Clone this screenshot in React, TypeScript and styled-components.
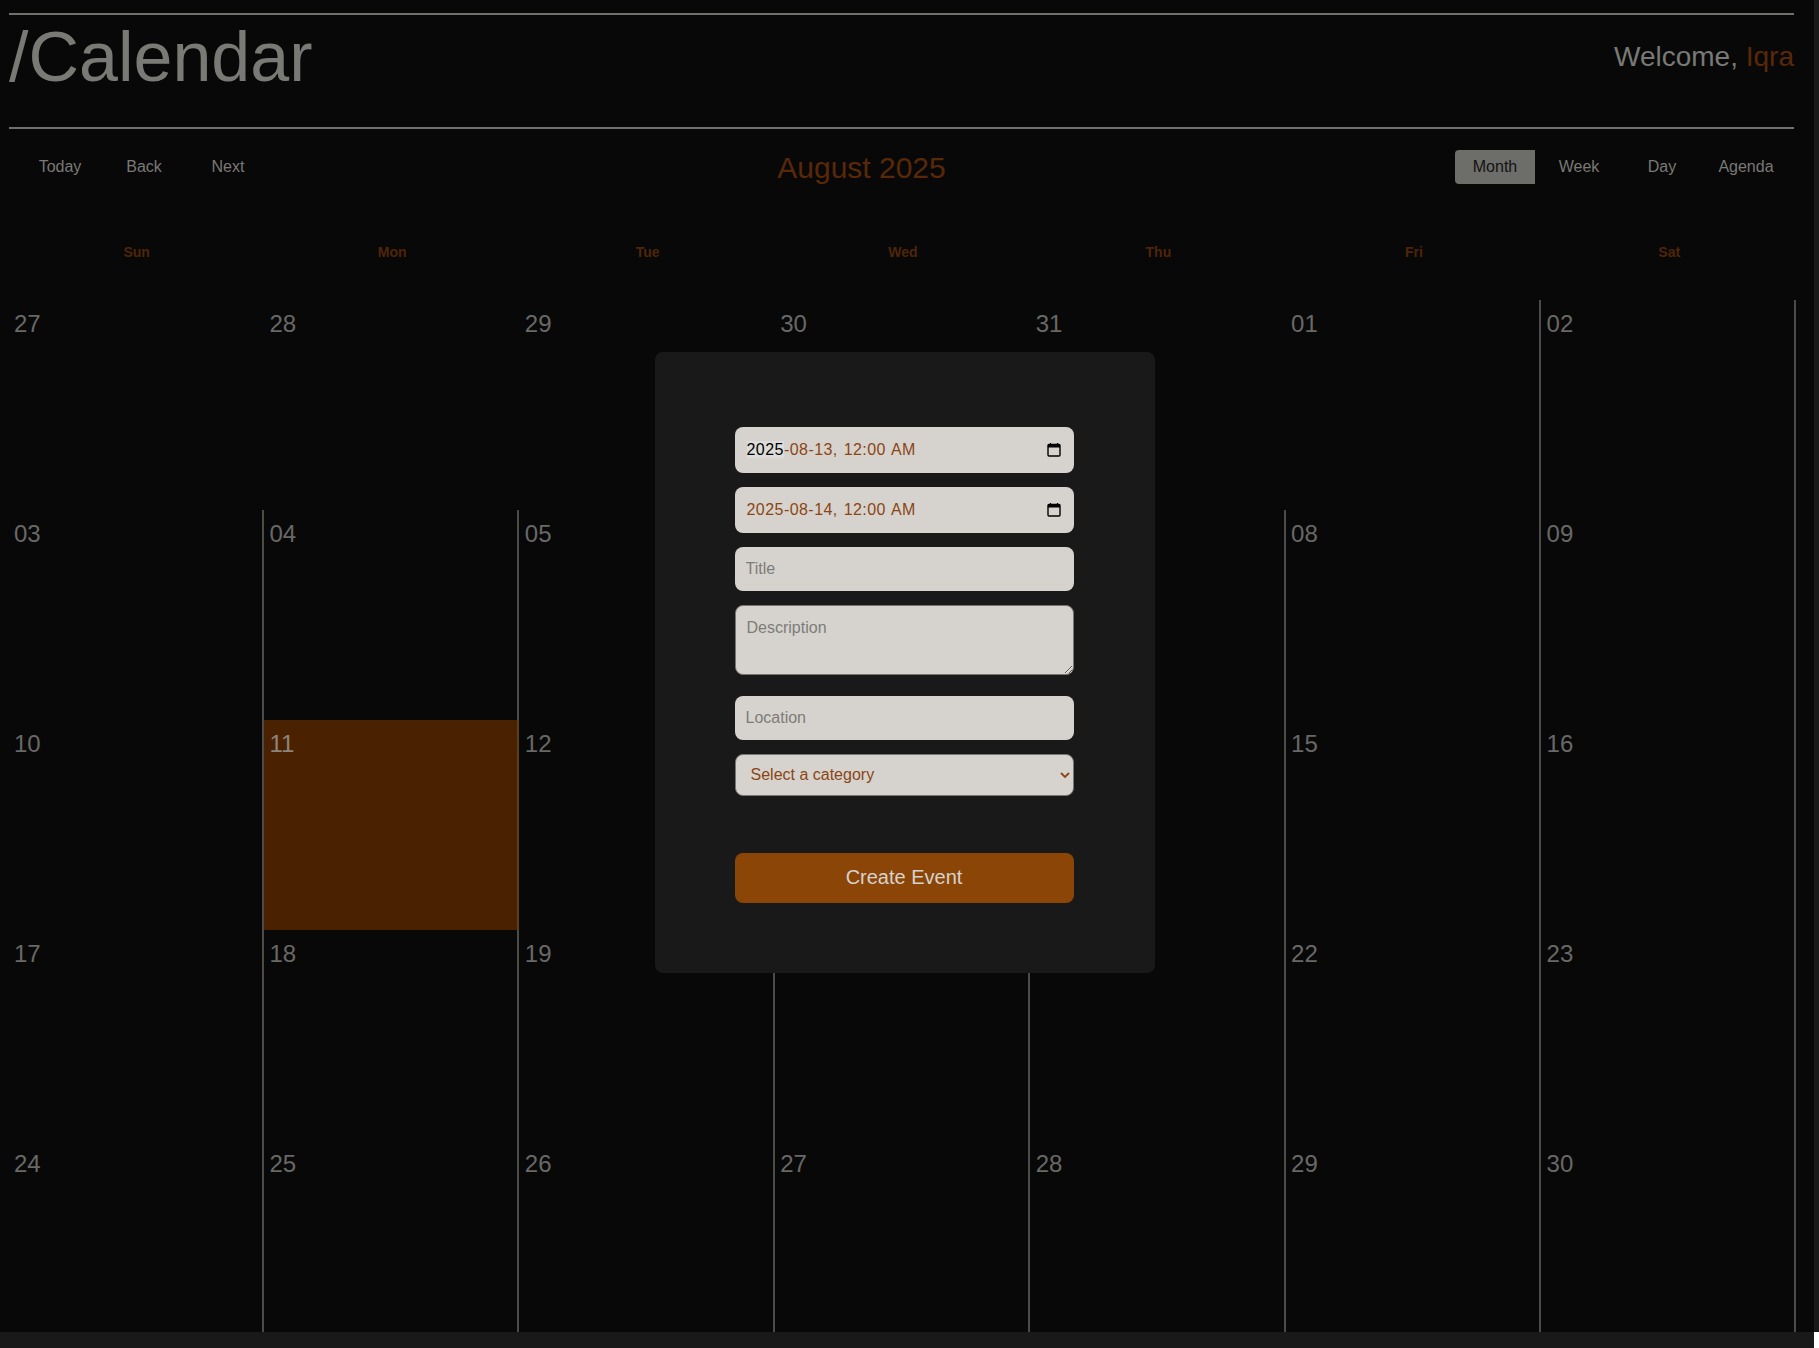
import React from "react";
import styled, { createGlobalStyle } from "styled-components";

const GlobalStyle = createGlobalStyle`
  html, body {
    margin: 0;
    background: #191919;
  }
  body {
    font-family: "Liberation Sans", Arial, sans-serif;
    overflow: hidden;
  }
`;

const Shell = styled.div`
  width: 1819px;
  height: 1348px;
  display: flex;
  flex-direction: column;
  background: #191919;
`;

const Canvas = styled.main`
  position: relative;
  box-sizing: border-box;
  width: 1814px;
  height: 1332px;
  padding: 13px 20px 0 9px;
  background: #080808;
  overflow: hidden;
`;

const Footer = styled.div`
  flex: 1;
  display: flex;
  justify-content: flex-end;
`;

const Corner = styled.div`
  width: 5px;
  background: #fff;
`;

const Rule = styled.hr`
  margin: 0;
  border: 0;
  height: 2px;
  background: #70706d;
`;

const Header = styled.header`
  height: 112px;
  display: flex;
  justify-content: space-between;
  align-items: flex-start;
`;

const PageTitle = styled.h1`
  margin: 0;
  padding-top: 2px;
  font-size: 70px;
  line-height: 80px;
  font-weight: 400;
  color: #797975;
`;

const Welcome = styled.div`
  padding-top: 26px;
  font-size: 28px;
  line-height: 32px;
  color: #797975;
`;

const UserName = styled.span`
  color: #582809;
`;

const Toolbar = styled.div`
  margin-top: 21px;
  height: 34px;
  display: flex;
  justify-content: space-between;
  align-items: center;
`;

const ButtonGroup = styled.div<{ $left?: number; $right?: number }>`
  display: flex;
  margin: 0 ${(p) => p.$right ?? 0}px 0 ${(p) => p.$left ?? 0}px;
`;

const NavButton = styled.button<{ $width: number; $active?: boolean }>`
  width: ${(p) => p.$width}px;
  height: 34px;
  padding: 0;
  border: 0;
  border-radius: ${(p) => (p.$active ? "4px 0 0 4px" : "0")};
  background: ${(p) => (p.$active ? "#6d6d69" : "transparent")};
  color: ${(p) => (p.$active ? "#131313" : "#797975")};
  font: 400 16px "Liberation Sans", Arial, sans-serif;
`;

const MonthLabel = styled.span`
  padding: 2px 2px 0 0;
  font-size: 30px;
  line-height: 34px;
  color: #582809;
`;

const WeekHead = styled.div`
  height: 116px;
  padding-top: 20px;
  box-sizing: border-box;
  display: grid;
  grid-template-columns: repeat(7, 255.43px);
  align-items: center;
`;

const WeekDay = styled.div`
  text-align: center;
  font-size: 14px;
  font-weight: 700;
  color: #4f2508;
`;

const MonthGrid = styled.div`
  margin-left: -0.5px;
  display: grid;
  grid-template-columns: repeat(7, 255.43px);
  grid-template-rows: repeat(4, 210px) 192px;
`;

const DayCell = styled.div<{ $offRange?: boolean; $today?: boolean }>`
  box-sizing: border-box;
  padding: 10px 0 0 5.5px;
  border-right: 2px solid
    ${(p) => (p.$offRange ? "transparent" : p.$today ? "#5c3d20" : "#4b4b49")};
  background: ${(p) => (p.$today ? "#4a2202" : "transparent")};
  font-size: 24px;
  line-height: 28px;
  color: ${(p) => (p.$today ? "#8d857b" : "#686866")};
`;

const Backdrop = styled.div`
  position: absolute;
  inset: 0 5px 8px 0;
  display: flex;
  align-items: center;
  justify-content: center;
`;

const Modal = styled.form`
  box-sizing: border-box;
  width: 500px;
  height: 621px;
  padding: 75px 81px 0 80px;
  display: flex;
  flex-direction: column;
  gap: 14px;
  background: #191919;
  border-radius: 8px;
`;

const DateField = styled.div`
  box-sizing: border-box;
  height: 46px;
  flex: none;
  padding: 0 13px 0 12px;
  display: flex;
  align-items: center;
  justify-content: space-between;
  border-radius: 8px;
  background: #d6d3ce;
`;

const DateValue = styled.span`
  font-size: 16px;
  letter-spacing: 0.45px;
  word-spacing: 1px;
  color: #8b4513;
`;

const DateSegment = styled.span`
  background: #dcdcda;
  color: #000;
`;

const fieldBase = `
  box-sizing: border-box;
  width: 100%;
  flex: none;
  background: #d6d3ce;
  font: 400 16px "Liberation Sans", Arial, sans-serif;
  outline: none;
  &::placeholder {
    color: #7d7c78;
    opacity: 1;
  }
`;

const TextField = styled.input`
  ${fieldBase}
  height: 44px;
  padding: 0 11px;
  border: 0;
  border-radius: 8px;
`;

const TextArea = styled.textarea`
  ${fieldBase}
  display: block;
  height: 70px;
  margin-bottom: 7px;
  padding: 13px 11px 10px;
  border: 1px solid #767674;
  border-radius: 8px;
`;

const SelectWrap = styled.div`
  position: relative;
  flex: none;
  height: 42px;
`;

const Select = styled.select`
  ${fieldBase}
  display: block;
  height: 42px;
  padding: 0 15px;
  border: 1px solid #767674;
  border-radius: 8px;
  color: #8b4513;
  appearance: none;
`;

const Chevron = styled.svg`
  position: absolute;
  top: 16px;
  right: 4px;
  pointer-events: none;
`;

const SubmitButton = styled.button`
  height: 50px;
  flex: none;
  margin-top: 43px;
  border: 0;
  border-radius: 8px;
  background: #8b4506;
  color: #d6d3ce;
  font: 400 20px "Liberation Sans", Arial, sans-serif;
`;

function CalendarIcon() {
  return (
    <svg width="14" height="15" viewBox="0 0 14 15" fill="none">
      <rect x="1" y="2.5" width="12" height="11.5" rx="1" stroke="#000" strokeWidth="1.4" />
      <rect x="1" y="2.5" width="12" height="3" fill="#000" />
      <path d="M3.5 1v2M10.5 1v2" stroke="#000" strokeWidth="1.2" />
    </svg>
  );
}

type Day = { label: string; offRange?: boolean; today?: boolean };

const pad = (n: number) => String(n).padStart(2, "0");

const augustDays: Day[] = [
  ...[27, 28, 29, 30, 31].map((n) => ({ label: pad(n), offRange: true })),
  ...Array.from({ length: 30 }, (_, i) => ({ label: pad(i + 1), today: i + 1 === 11 })),
];

const weekDays = ["Sun", "Mon", "Tue", "Wed", "Thu", "Fri", "Sat"];

export default function App() {
  return (
    <Shell>
      <GlobalStyle />
      <Canvas>
        <Rule />
        <Header>
          <PageTitle>/Calendar</PageTitle>
          <Welcome>
            Welcome, <UserName>Iqra</UserName>
          </Welcome>
        </Header>
        <Rule />
        <Toolbar>
          <ButtonGroup $left={9}>
            <NavButton type="button" $width={84}>Today</NavButton>
            <NavButton type="button" $width={84}>Back</NavButton>
            <NavButton type="button" $width={84}>Next</NavButton>
          </ButtonGroup>
          <MonthLabel>August 2025</MonthLabel>
          <ButtonGroup $right={3}>
            <NavButton type="button" $width={80} $active>Month</NavButton>
            <NavButton type="button" $width={88}>Week</NavButton>
            <NavButton type="button" $width={78}>Day</NavButton>
            <NavButton type="button" $width={90}>Agenda</NavButton>
          </ButtonGroup>
        </Toolbar>
        <WeekHead>
          {weekDays.map((d) => (
            <WeekDay key={d}>{d}</WeekDay>
          ))}
        </WeekHead>
        <MonthGrid>
          {augustDays.map((d, i) => (
            <DayCell key={i} $offRange={d.offRange} $today={d.today}>
              {d.label}
            </DayCell>
          ))}
        </MonthGrid>
        <Backdrop>
          <Modal onSubmit={(e) => e.preventDefault()}>
            <DateField>
              <DateValue>
                <DateSegment>2025</DateSegment>-08-13, 12:00 AM
              </DateValue>
              <CalendarIcon />
            </DateField>
            <DateField>
              <DateValue>2025-08-14, 12:00 AM</DateValue>
              <CalendarIcon />
            </DateField>
            <TextField placeholder="Title" />
            <TextArea placeholder="Description" />
            <TextField placeholder="Location" />
            <SelectWrap>
              <Select defaultValue="">
                <option value="">Select a category</option>
              </Select>
              <Chevron width="10" height="10" viewBox="0 0 10 10" fill="none">
                <path d="M1 3l4 4 4-4" stroke="#8b4513" strokeWidth="1.8" />
              </Chevron>
            </SelectWrap>
            <SubmitButton type="submit">Create Event</SubmitButton>
          </Modal>
        </Backdrop>
      </Canvas>
      <Footer>
        <Corner />
      </Footer>
    </Shell>
  );
}
